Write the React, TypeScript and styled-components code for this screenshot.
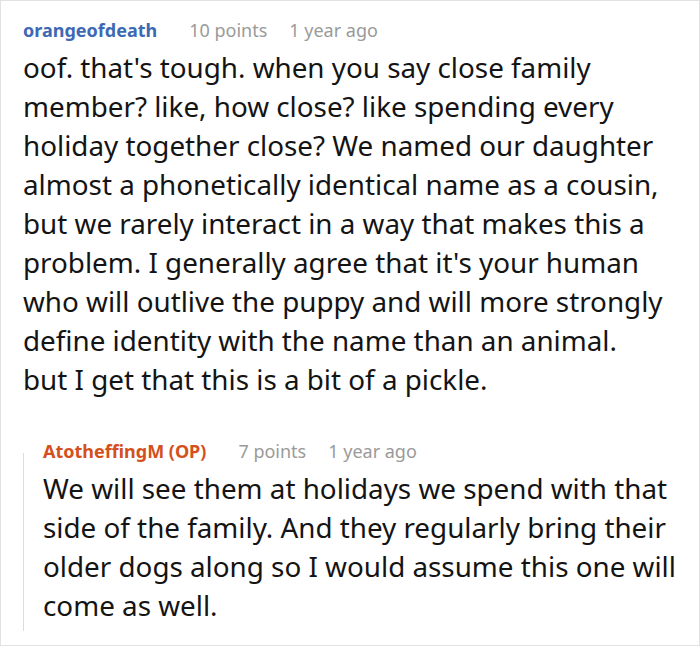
import React from 'react'
import styled, { createGlobalStyle } from 'styled-components'

const GlobalStyle = createGlobalStyle`
  html, body {
    margin: 0;
    padding: 0;
    background: #fff;
  }
  body {
    font-family: 'Noto Sans', 'Open Sans', sans-serif;
  }
`

const Frame = styled.div`
  box-sizing: border-box;
  width: 700px;
  height: 646px;
  border: 1px solid #e2e2e2;
  padding: 17px 14px 0 22px;
  overflow: hidden;
`

const Meta = styled.div`
  display: flex;
  align-items: baseline;
  gap: 22px;
  font-size: 18px;
  line-height: 25px;
`

const Author = styled.span<{ $op?: boolean }>`
  font-weight: 700;
  color: ${p => (p.$op ? '#d4501c' : '#3d69b3')};
  margin-right: 10px;
`

const Faint = styled.span`
  color: #9a9a9a;
`

const Body = styled.p`
  margin: 5px 0 0;
  font-size: 27.8px;
  line-height: 39px;
  color: #141414;
`

const Reply = styled.div`
  position: relative;
  margin-top: 40px;
  padding-left: 20px;

  &::before {
    content: '';
    position: absolute;
    left: 0;
    top: 14px;
    bottom: -6px;
    width: 1px;
    background: #dcdcdc;
  }
`

type CommentProps = {
  author: string
  op?: boolean
  points: number
  when: string
  text: string
}

const Header: React.FC<Omit<CommentProps, 'text'>> = ({ author, op, points, when }) => (
  <Meta>
    <Author $op={op}>{author}</Author>
    <Faint>{points} points</Faint>
    <Faint>{when}</Faint>
  </Meta>
)

const App: React.FC = () => {
  return (
    <>
      <GlobalStyle />
      <Frame>
        <Header author="orangeofdeath" points={10} when="1 year ago" />
        <Body>
          oof. that's tough. when you say close family member? like, how close? like spending every
          holiday together close? We named our daughter almost a phonetically identical name as a
          cousin, but we rarely interact in a way that makes this a problem. I generally agree that
          it's your human who will outlive the puppy and will more strongly define identity with the
          name than an animal.
          <br />
          but I get that this is a bit of a pickle.
        </Body>
        <Reply>
          <Header author="AtotheffingM (OP)" op points={7} when="1 year ago" />
          <Body>
            We will see them at holidays we spend with that side of the family. And they regularly
            bring their older dogs along so I would assume this one will come as well.
          </Body>
        </Reply>
      </Frame>
    </>
  )
}

export default App
